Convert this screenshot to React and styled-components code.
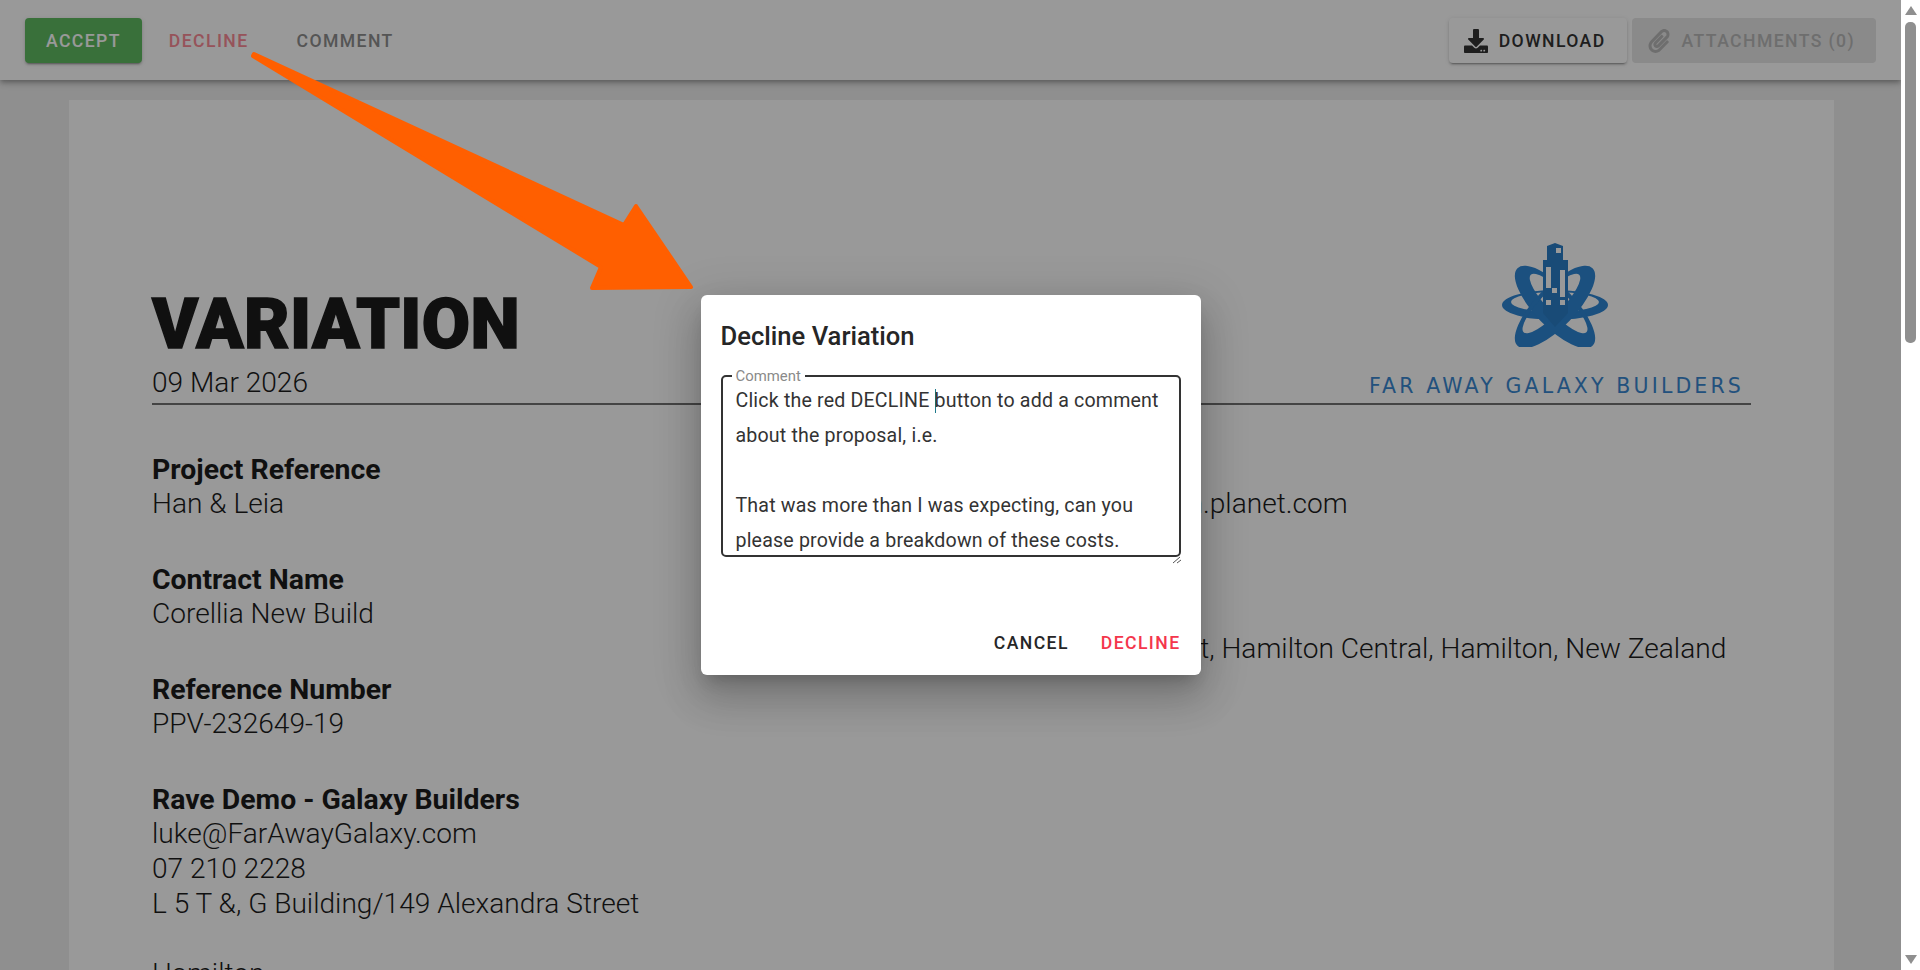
import styled, { createGlobalStyle } from 'styled-components';
import { FaDownload, FaPaperclip } from 'react-icons/fa';

const GlobalStyle = createGlobalStyle`
  html, body {
    margin: 0;
    height: 100%;
    overflow: hidden;
    font-family: Roboto, 'Liberation Sans', sans-serif;
  }
  * {
    box-sizing: border-box;
  }
`;

const Screen = styled.div`
  display: flex;
  height: 100vh;
  background: #fff;
`;

const Viewport = styled.div`
  position: relative;
  flex: 1;
  overflow: hidden;
  background: #eee;
`;

const Toolbar = styled.div`
  position: relative;
  display: flex;
  align-items: center;
  justify-content: space-between;
  height: 80px;
  padding: 0 25px;
  background: #fff;
  box-shadow: 0 2px 4px -1px rgba(0, 0, 0, 0.2), 0 4px 5px 0 rgba(0, 0, 0, 0.14),
    0 1px 10px 0 rgba(0, 0, 0, 0.12);
`;

const ButtonGroup = styled.div`
  display: flex;
  gap: ${({ $gap }) => $gap}px;
`;

const BarButton = styled.button`
  display: flex;
  align-items: center;
  gap: 11px;
  height: 45px;
  padding: 1px 21px 0 ${({ $hasIcon }) => ($hasIcon ? 15 : 21)}px;
  border: 0;
  border-radius: 4px;
  font-family: inherit;
  font-size: 17.6px;
  font-weight: 500;
  letter-spacing: 0.08em;
  background: ${({ $bg }) => $bg || 'transparent'};
  color: ${({ $color }) => $color};
  box-shadow: ${({ $raised }) =>
    $raised
      ? '0 3px 1px -2px rgba(0,0,0,.2), 0 2px 2px 0 rgba(0,0,0,.14), 0 1px 5px 0 rgba(0,0,0,.12)'
      : 'none'};
  svg {
    font-size: ${({ $iconSize }) => $iconSize || 24}px;
    flex: none;
  }
`;

const Paper = styled.div`
  width: 1765px;
  margin: 20px 0 0 69px;
  padding: 141px 83px 0;
  background: #fff;
  color: #1c1c1c;
`;

const Header = styled.header`
  display: flex;
  justify-content: space-between;
  align-items: flex-end;
  padding-right: 7px;
  border-bottom: 2px solid #727272;
`;

const HeadingBlock = styled.div`
  padding-bottom: 3px;
`;

const Title = styled.h1`
  margin: 0;
  font-size: 70px;
  line-height: 70px;
  font-weight: 900;
  letter-spacing: 0.3px;
  -webkit-text-stroke: 1.5px #1c1c1c;
`;

const DateLine = styled.div`
  margin-top: 6px;
  font-size: 28.1px;
  line-height: 35px;
  font-weight: 300;
`;

const LogoBlock = styled.div`
  display: flex;
  flex-direction: column;
  align-items: center;
  gap: 27px;
  padding-bottom: 5px;
`;

const LogoText = styled.div`
  font-family: 'DejaVu Sans', sans-serif;
  font-size: 20.5px;
  line-height: 24px;
  letter-spacing: 3.14px;
  white-space: nowrap;
  color: #3a87d0;
`;

const Columns = styled.div`
  display: grid;
  grid-template-columns: 570px 1fr;
  padding-top: 48px;
`;

const Section = styled.section`
  margin-bottom: 42px;
`;

const Label = styled.div`
  font-size: 28.4px;
  line-height: 33px;
  font-weight: 700;
`;

const Value = styled.div`
  font-size: 28.1px;
  line-height: 35px;
  font-weight: 300;
  white-space: nowrap;
`;

const Overlay = styled.div`
  position: absolute;
  inset: 0;
  display: flex;
  align-items: center;
  justify-content: center;
  background: rgba(0, 0, 0, 0.4);
`;

const Dialog = styled.div`
  display: flex;
  flex-direction: column;
  width: 500px;
  height: 380px;
  padding: 25px 20px 16px;
  background: #fff;
  border-radius: 6px;
  color: #262626;
  box-shadow: 0 11px 15px -7px rgba(0, 0, 0, 0.2), 0 24px 38px 3px rgba(0, 0, 0, 0.14),
    0 9px 46px 8px rgba(0, 0, 0, 0.12);
`;

const DialogTitle = styled.h2`
  margin: 0 0 23px;
  font-size: 25.6px;
  line-height: 32px;
  font-weight: 500;
`;

const CommentBox = styled.div`
  position: relative;
  height: 182px;
  padding: 6px 13px 0;
  border: 2px solid #333;
  border-radius: 5px;
  font-size: 19.6px;
  line-height: 35px;
  letter-spacing: 0.009em;
  white-space: nowrap;
  color: #333;
`;

const FloatingLabel = styled.span`
  position: absolute;
  top: -9px;
  left: 9px;
  padding: 0 4px;
  background: #fff;
  font-size: 14.9px;
  line-height: 16px;
  letter-spacing: 0;
  color: #8a8a8a;
`;

const Caret = styled.span`
  display: inline-block;
  width: 1px;
  height: 24px;
  margin-right: -1px;
  vertical-align: -6px;
  background: #1f7a8c;
`;

const Grip = styled.svg`
  position: absolute;
  right: -3px;
  bottom: -9px;
`;

const DialogActions = styled.div`
  display: flex;
  justify-content: flex-end;
  gap: 32px;
  margin-top: auto;
  padding-bottom: 4px;
`;

const TextAction = styled.span`
  font-size: 17.6px;
  line-height: 24px;
  font-weight: 500;
  letter-spacing: 0.08em;
  color: ${({ $color }) => $color};
`;

const ArrowLayer = styled.svg`
  position: absolute;
  top: 0;
  left: 0;
`;

const ScrollTrack = styled.div`
  display: flex;
  flex-direction: column;
  align-items: center;
  width: 19px;
  padding-top: 6px;
  background: #fff;
`;

const ScrollArrow = styled.div`
  width: 0;
  height: 0;
  border-left: 6.5px solid transparent;
  border-right: 6.5px solid transparent;
  border-bottom: ${({ $down }) => ($down ? '0' : '9px solid #8f8f8f')};
  border-top: ${({ $down }) => ($down ? '9px solid #8f8f8f' : '0')};
  margin-top: ${({ $down }) => ($down ? 'auto' : '0')};
  margin-bottom: ${({ $down }) => ($down ? '6px' : '7px')};
`;

const ScrollThumb = styled.div`
  width: 11px;
  height: 321px;
  border-radius: 5px;
  background: #8f8f8f;
`;

function Logo() {
  const tilted = 'M-54 0A54 20 0 1 0 54 0A54 20 0 1 0 -54 0ZM-40 -5A40 11 0 1 1 40 -5A40 11 0 1 1 -40 -5Z';
  const flat = 'M-53 0A53 15 0 1 0 53 0A53 15 0 1 0 -53 0ZM-44 -3A44 10 0 1 1 44 -3A44 10 0 1 1 -44 -3Z';
  return (
    <svg width="110" height="106" viewBox="0 0 110 106">
      <g fill="#2d85d4">
        <path fillRule="evenodd" d={flat} transform="translate(54 64)" />
        <path fillRule="evenodd" d={tilted} transform="translate(54 66) rotate(46) scale(-1 1)" />
        <path fillRule="evenodd" d={tilted} transform="translate(54 66) rotate(-46)" />
      </g>
      <path d="M46 19V5L54 2L62 5V19H67V72L54 86L42 72V19Z" fill="#2b7dc6" />
      <g fill="#fff">
        <rect x="55" y="7" width="5" height="5" />
        <rect x="45" y="26" width="5" height="21" />
        <rect x="59" y="29" width="5" height="27" />
        <rect x="51" y="47" width="5" height="5" />
        <rect x="45" y="59" width="5" height="5" />
        <rect x="59" y="59" width="5" height="5" />
      </g>
    </svg>
  );
}

function Field({ label, children }) {
  return (
    <Section>
      <Label>{label}</Label>
      {children}
    </Section>
  );
}

export default function App() {
  return (
    <Screen>
      <GlobalStyle />
      <Viewport>
        <Toolbar>
          <ButtonGroup $gap={6}>
            <BarButton $bg="#5fbb62" $color="#fff" $raised>ACCEPT</BarButton>
            <BarButton $color="#fb8a96">DECLINE</BarButton>
            <BarButton $color="#8e8e8e">COMMENT</BarButton>
          </ButtonGroup>
          <ButtonGroup $gap={5}>
            <BarButton $bg="#fff" $color="#333" $raised $hasIcon>
              <FaDownload />
              DOWNLOAD
            </BarButton>
            <BarButton $bg="#e6e6e6" $color="#b8b8b8" $iconSize={24} $hasIcon>
              <FaPaperclip />
              ATTACHMENTS (0)
            </BarButton>
          </ButtonGroup>
        </Toolbar>
        <Paper>
          <Header>
            <HeadingBlock>
              <Title>VARIATION</Title>
              <DateLine>09 Mar 2026</DateLine>
            </HeadingBlock>
            <LogoBlock>
              <Logo />
              <LogoText>FAR AWAY GALAXY BUILDERS</LogoText>
            </LogoBlock>
          </Header>
          <Columns>
            <div>
              <Field label="Project Reference"><Value>Han &amp; Leia</Value></Field>
              <Field label="Contract Name"><Value>Corellia New Build</Value></Field>
              <Field label="Reference Number"><Value>PPV-232649-19</Value></Field>
              <Field label="Rave Demo - Galaxy Builders">
                <Value>luke@FarAwayGalaxy.com</Value>
                <Value>07 210 2228</Value>
                <Value>L 5 T &amp;, G Building/149 Alexandra Street</Value>
                <Value>&nbsp;</Value>
                <Value>Hamilton</Value>
              </Field>
            </div>
            <div>
              <Field label="Client">
                <Value>han.solo.and.leia.organa@corellian.han.planet.com</Value>
                <Value>&nbsp;</Value>
              </Field>
              <Field label="Site Address">
                <Value>L 5 T &amp;, G Building/149 Alexandra Street, Hamilton Central, Hamilton, New Zealand</Value>
              </Field>
            </div>
          </Columns>
        </Paper>
        <Overlay>
          <Dialog>
            <DialogTitle>Decline Variation</DialogTitle>
            <CommentBox>
              <FloatingLabel>Comment</FloatingLabel>
              Click the red DECLINE <Caret />button to add a comment
              <br />
              about the proposal, i.e.
              <br />
              <br />
              That was more than I was expecting, can you
              <br />
              please provide a breakdown of these costs.
              <Grip width="10" height="8" viewBox="0 0 10 8">
                <path d="M1 7L8 1M5 7L9 4" stroke="#555" strokeWidth="1" fill="none" />
              </Grip>
            </CommentBox>
            <DialogActions>
              <TextAction $color="#262626">CANCEL</TextAction>
              <TextAction $color="#f4364c">DECLINE</TextAction>
            </DialogActions>
          </Dialog>
        </Overlay>
        <ArrowLayer width="720" height="300" viewBox="0 0 720 300">
          <path
            d="M254 54L624 225L636 206L691 287L592 288L601 267L253 56Z"
            fill="#ff5f00"
            stroke="#ff5f00"
            strokeWidth="4"
            strokeLinejoin="round"
          />
        </ArrowLayer>
      </Viewport>
      <ScrollTrack>
        <ScrollArrow />
        <ScrollThumb />
        <ScrollArrow $down />
      </ScrollTrack>
    </Screen>
  );
}
